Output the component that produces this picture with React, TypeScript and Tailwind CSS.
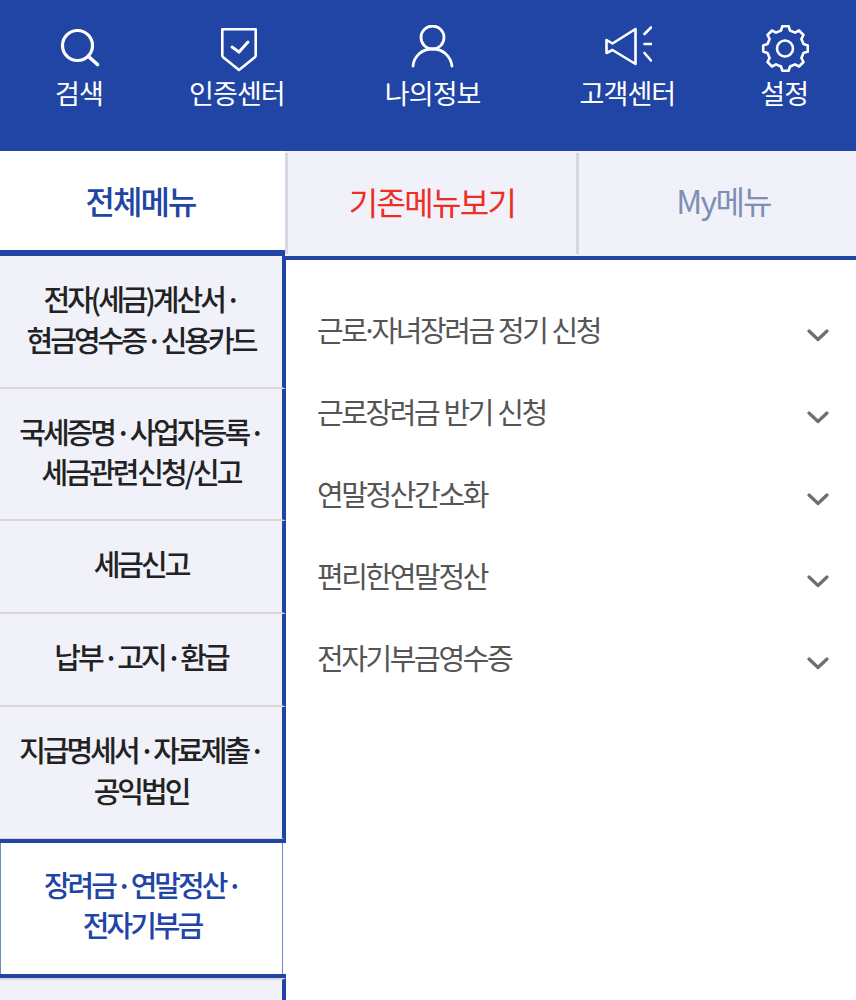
const topLinks = [
  { label: "검색", icon: <SearchIcon />, className: "ml-[54px]" },
  { label: "인증센터", icon: <ShieldIcon />, className: "ml-[85px]" },
  { label: "나의정보", icon: <UserIcon />, className: "ml-[100px]" },
  { label: "고객센터", icon: <MegaphoneIcon />, className: "ml-[99px]" },
  { label: "설정", icon: <GearIcon />, className: "ml-[84px]" },
];

const sideMenu = [
  { lines: ["전자(세금)계산서 ·", "현금영수증 · 신용카드"], height: "h-[133px]" },
  { lines: ["국세증명 · 사업자등록 ·", "세금관련 신청/신고"], height: "h-[132px]" },
  { lines: ["세금신고"], height: "h-[93px]" },
  { lines: ["납부 · 고지 · 환급"], height: "h-[93px]" },
  { lines: ["지급명세서 · 자료제출 ·", "공익법인"], height: "h-[133px]" },
];

const subMenu = [
  <>
    근<span className="tracking-[-6.4px]">로·</span>자녀장려금 정기 신청
  </>,
  "근로장려금 반기 신청",
  "연말정산간소화",
  "편리한연말정산",
  "전자기부금영수증",
];

function SearchIcon() {
  return (
    <svg width="50" height="50" viewBox="0 0 50 50" fill="none" stroke="white" strokeWidth="3.2" strokeLinecap="round">
      <circle cx="23.500" cy="20.500" r="15" />
      <path d="M34.500 31.500 43.500 39.500" strokeWidth="3.600" />
    </svg>
  );
}

function ShieldIcon() {
  return (
    <svg width="50" height="50" viewBox="0 0 50 50" fill="none" stroke="white" strokeWidth="2.600" strokeLinejoin="round" strokeLinecap="round">
      <path d="M10.300 4.300h33.400v26c0 1-.4 1.700-1.200 2.300L27 45 11.500 32.600c-.8-.6-1.200-1.300-1.200-2.300z" />
      <path d="m20 22 7 5 9-10" strokeWidth="3" strokeLinejoin="miter" />
    </svg>
  );
}

function UserIcon() {
  return (
    <svg width="50" height="50" viewBox="0 0 50 50" fill="none" stroke="white" strokeWidth="2.800" strokeLinecap="round">
      <circle cx="24.500" cy="12.500" r="11.500" />
      <path d="M5 41c1-10 9-17 19.500-17s18 7 19.500 17" />
    </svg>
  );
}

function MegaphoneIcon() {
  return (
    <svg width="50" height="50" viewBox="0 0 50 50" fill="none" stroke="white" strokeWidth="2.600" strokeLinecap="round" strokeLinejoin="round">
      <path d="M4.500 15 10.500 18.500 33.500 4V39L10.500 25 4.500 28z" />
      <path d="M42.500 9 49 2.500M42.500 19H50M42.500 28 49 35.500" />
    </svg>
  );
}

// eight-tooth cog outline around the centre of the box
const gearPath = Array.from({ length: 8 }, (_, i) => {
  const tooth = (i * Math.PI) / 4 - Math.PI / 2;
  const at = (r: number, offset: number) => {
    const a = tooth + (offset * Math.PI) / 180;
    return `${(26.5 + r * Math.cos(a)).toFixed(1)} ${(23.5 + r * Math.sin(a)).toFixed(1)}`;
  };
  return `L${at(18.500, -14)} L${at(22.500, -8)} L${at(22.500, 8)} L${at(18.500, 14)}`;
})
  .join(" ")
  .replace("L", "M");

function GearIcon() {
  return (
    <svg width="50" height="50" viewBox="0 0 50 50" fill="none" stroke="white" strokeWidth="2.600" strokeLinejoin="round">
      <circle cx="26" cy="23.500" r="8" />
      <path d={`${gearPath} Z`} />
    </svg>
  );
}

function ChevronIcon() {
  return (
    <svg className="mt-[10px] mr-[1px]" width="22" height="13" viewBox="0 0 22 13" fill="none" stroke="#6f6f6f" strokeWidth="3.200" strokeLinecap="round" strokeLinejoin="round">
      <path d="m2 2 9 8.500L20 2" />
    </svg>
  );
}

export default function App() {
  return (
    <div className="h-[1000px] w-[856px] overflow-hidden bg-white font-['Noto_Sans_CJK_KR','Liberation_Sans',sans-serif]">
      <header className="flex h-[151px] items-start bg-[#2145a5] pt-[25px] text-white">
        {topLinks.map((link) => (
          <a key={link.label} className={`flex flex-col items-center ${link.className}`}>
            <span className="flex h-[50px] items-start justify-center">{link.icon}</span>
            <span className="text-[27px] leading-[36px] tracking-[-0.9px] whitespace-nowrap">{link.label}</span>
          </a>
        ))}
      </header>

      <nav className="flex h-[109px]">
        <div className="flex h-[105px] w-[285px] items-center justify-center border-b-[6px] border-[#2145a5] bg-white pr-[4px] pb-[2px] text-[32px] font-medium tracking-[-2px] text-[#2145a5]">
          전체메뉴
        </div>
        <div className="h-[109px] w-[294px] border-b-[4px] border-[#2145a5] bg-[#f0f1f9] pt-[2px]">
          <div className="flex h-[101px] items-center justify-center border-x-[3px] border-[#d5d7e4] pb-[5px] text-[32px] tracking-[-1.7px] text-[#ee2d24]">
            기존메뉴보기
          </div>
        </div>
        <div className="flex h-[109px] flex-1 items-center justify-center border-b-[4px] border-[#2145a5] bg-[#f0f1f9] pb-[7px] pl-[12px] text-[32px] tracking-[-1.7px] text-[#7d8fb3]">
          My메뉴
        </div>
      </nav>

      <div className="-mt-[4px] flex">
        <ul className="w-[286px] shrink-0 text-[29px] leading-[40.5px] font-medium tracking-[-3px] [word-spacing:-2.5px]">
          {sideMenu.map((item) => (
            <li
              key={item.lines[0]}
              className={`flex flex-col items-center justify-center border-r-[4px] border-b-[2px] border-r-[#2145a5] border-b-[#d8d8d8] bg-[#f0f1f9] pb-[6px] text-[#222222] ${item.height}`}
            >
              {item.lines.map((line) => (
                <span key={line}>{line}</span>
              ))}
            </li>
          ))}
          <li className="-mt-[1px] flex h-[139px] flex-col items-center justify-center border-y-[4px] border-y-[#2145a5] bg-white pr-[2px] pb-[9px] text-[#2145a5] [box-shadow:inset_1px_0_#6d87c8,inset_-3px_0_white,inset_-4px_0_#6d87c8]">
            <span>장려금 · 연말정산 ·</span>
            <span>전자기부금</span>
          </li>
          <li className="h-[30px] border-t-[2px] border-r-[4px] border-t-[#d8d8d8] border-r-[#2145a5] bg-[#f0f1f9]" />
        </ul>

        <ul className="flex-1 pt-[33px] pr-[26px] pl-[31px] text-[29px] tracking-[-2.4px] text-[#555555] [word-spacing:1px]">
          {subMenu.map((label, i) => (
            <li key={i} className="flex h-[82px] items-center justify-between">
              <span>{label}</span>
              <ChevronIcon />
            </li>
          ))}
        </ul>
      </div>
    </div>
  );
}
